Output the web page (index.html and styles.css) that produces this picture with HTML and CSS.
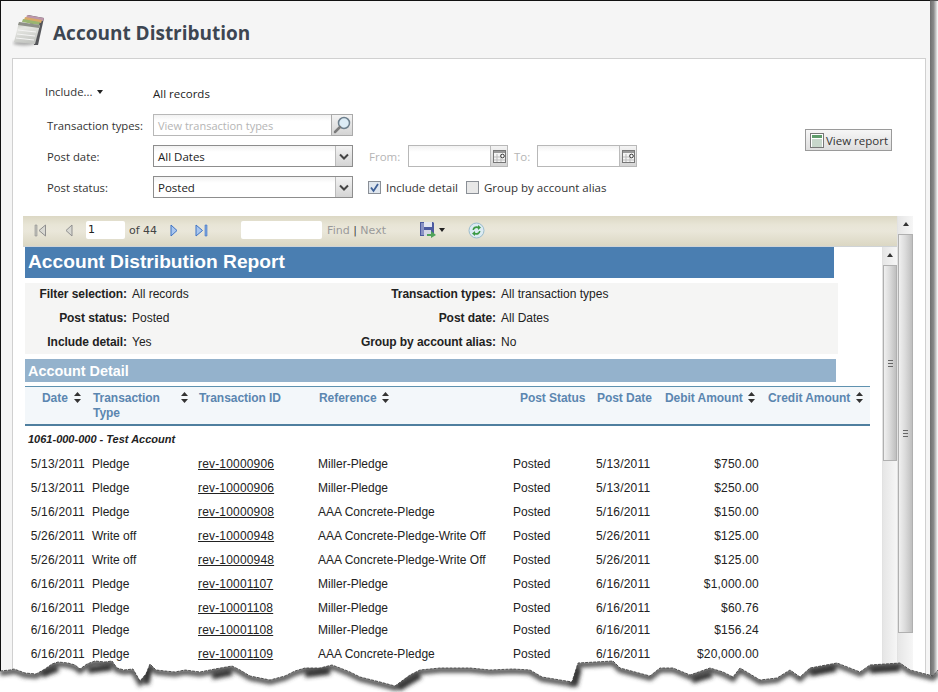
FILE: index.html
```html
<!DOCTYPE html>
<html lang="en">

<head>
  <meta charset="UTF-8">
  <title>Account Distribution</title>
  <link rel="stylesheet" href="styles.css">
</head>

<body>
  <svg class="defs" width="0" height="0">
    <symbol id="sort" viewBox="0 0 7 11">
      <path d="M3.500 0 7 4H0zM0 7h7l-3.500 4z" fill="#333" />
    </symbol>
    <symbol id="chevron" viewBox="0 0 10 7">
      <path d="M1 1.500 5 5.500 9 1.500" fill="none" stroke="#444" stroke-width="2" />
    </symbol>
    <symbol id="calendar" viewBox="0 0 13 13">
      <rect x="0.500" y="0.500" width="12" height="12" fill="#f4f4f4" stroke="#777" />
      <rect x="1" y="1" width="11" height="2" fill="#999" />
      <path d="M1 7h7M1 10h11M4 4v8M8 4v8" stroke="#bbb" />
      <circle cx="9.500" cy="6" r="1.800" fill="#fff" stroke="#333" />
    </symbol>
  </svg>

  <div class="page">
    <div class="window">
      <header class="title-bar">
        <svg class="ledger" width="36" height="36" viewBox="0 0 36 36">
          <defs>
            <linearGradient id="sheet" x1="0" y1="0" x2="0.300" y2="1">
              <stop offset="0" stop-color="#b9bbb4" />
              <stop offset="0.350" stop-color="#e6e7e3" />
              <stop offset="1" stop-color="#c4c6c2" />
            </linearGradient>
            <filter id="icon-soft" x="-30%" y="-100%" width="160%" height="300%">
              <feGaussianBlur stdDeviation="1.500" />
            </filter>
          </defs>
          <ellipse cx="12" cy="30" rx="11" ry="2.500" fill="#aaa" filter="url(#icon-soft)" />
          <path d="M16 2 32 5 26 32 22 32z" fill="#55565a" />
          <path d="M15 2 32 5 31 8 14 5z" fill="#bd97ab" />
          <path d="M13 4 30 7 29 10 12 7z" fill="#d9a968" />
          <path d="M11 6 28 9 27 12 10 9z" fill="#9ab570" />
          <path d="M7 9 28 12 23 31 2 29z" fill="url(#sheet)" />
          <path d="M7 9 28 12 27 15 6 12z" fill="#8f9189" />
          <path d="M6 17 24 19M5 21 23 23M4 25 22 27" stroke="#f4f4f4" />
        </svg>
        <h1>Account Distribution</h1>
      </header>

      <main class="panel">
        <form class="filters">
          <div class="filter-grid">
            <span class="filter-label include">Include...<i class="caret"></i></span>
            <span class="all-records">All records</span>
            <span></span>

            <span class="filter-label">Transaction types:</span>
            <span class="combo">
              <span class="combo-text muted">View transaction types</span>
              <span class="combo-btn search-btn">
                <svg width="20" height="20" viewBox="0 0 20 20">
                  <circle cx="12" cy="8" r="5.500" fill="#dcecf6" stroke="#6d7f8d" stroke-width="1.500" />
                  <path d="M8 12 3 17" stroke="#7b7b7b" stroke-width="2.500" stroke-linecap="round" />
                </svg>
              </span>
            </span>
            <span></span>

            <span class="filter-label">Post date:</span>
            <span class="combo dark">
              <span class="combo-text">All Dates</span>
              <span class="combo-btn"><svg width="10" height="7"><use href="#chevron" /></svg></span>
            </span>
            <span class="dates">
              <span class="muted from">From:</span>
              <span class="combo date-box">
                <span class="combo-text"></span>
                <span class="combo-btn"><svg width="13" height="13"><use href="#calendar" /></svg></span>
              </span>
              <span class="muted to">To:</span>
              <span class="combo date-box">
                <span class="combo-text"></span>
                <span class="combo-btn"><svg width="13" height="13"><use href="#calendar" /></svg></span>
              </span>
            </span>

            <span class="filter-label">Post status:</span>
            <span class="combo dark">
              <span class="combo-text">Posted</span>
              <span class="combo-btn"><svg width="10" height="7"><use href="#chevron" /></svg></span>
            </span>
            <span class="checks">
              <span class="check">
                <svg width="13" height="13" viewBox="0 0 13 13">
                  <rect x="0.500" y="0.500" width="12" height="12" fill="#dfe6ee" stroke="#8a8f96" />
                  <path d="M3 6.500 5.500 10 10 3" fill="none" stroke="#3d5f96" stroke-width="1.800" />
                </svg>
                Include detail
              </span>
              <span class="check">
                <svg width="13" height="13" viewBox="0 0 13 13">
                  <rect x="0.500" y="0.500" width="12" height="12" fill="#e8e8e8" stroke="#8a8f96" />
                </svg>
                Group by account alias
              </span>
            </span>
          </div>

          <button class="view-btn" type="button">
            <svg width="14" height="15" viewBox="0 0 14 15">
              <rect x="0.500" y="0.500" width="13" height="14" fill="#fff" stroke="#777" />
              <rect x="2" y="2" width="10" height="3" fill="#5f9c6b" />
              <path d="M2 7h10M2 9h10M2 11h10M2 13h10" stroke="#8fae96" />
            </svg>
            View report
          </button>
        </form>

        <section class="viewer">
          <div class="viewer-main">
            <div class="toolbar">
              <svg class="tool first" width="13" height="13" viewBox="0 0 13 13">
                <path d="M1 1h2v11H1z" fill="#c2c2bb" stroke="#8f8f8f" stroke-width="0.600" />
                <path d="M11.500 1v11L5 6.500z" fill="#d8d8d2" stroke="#8f8f8f" />
              </svg>
              <svg class="tool prev" width="8" height="13" viewBox="0 0 8 13">
                <path d="M7 1v11L1 6.500z" fill="#d8d8d2" stroke="#8f8f8f" />
              </svg>
              <span class="tool-input page-input">1</span>
              <span class="page-count">of 44</span>
              <svg class="tool next" width="8" height="13" viewBox="0 0 8 13">
                <path d="M1 1v11l6-5.500z" fill="#a9c6ee" stroke="#3d72c4" />
              </svg>
              <svg class="tool last" width="13" height="13" viewBox="0 0 13 13">
                <path d="M1 1v11l6.500-5.500z" fill="#a9c6ee" stroke="#3d72c4" />
                <path d="M10 1h2v11h-2z" fill="#7fa6e0" stroke="#3d72c4" stroke-width="0.600" />
              </svg>
              <span class="tool-input find-input"></span>
              <span class="find-links">Find <b>|</b> Next</span>
              <svg class="tool save" width="16" height="16" viewBox="0 0 16 16">
                <path d="M0 0h13l1 1v13H0z" fill="#4c5aa0" />
                <rect x="1" y="1" width="3" height="12" fill="#8a92c4" />
                <rect x="4" y="0" width="8" height="5" fill="#e4e6f0" />
                <rect x="4" y="8" width="7" height="6" fill="#d5d7e6" />
                <path d="M7 12h4V9l5 4-5 3v-2H7z" fill="#4fa35a" />
              </svg>
              <i class="caret save-caret"></i>
              <svg class="tool refresh" width="17" height="17" viewBox="0 0 17 17">
                <circle cx="8.500" cy="8.500" r="7.500" fill="#dcebf3" stroke="#9bbccd" />
                <path d="M4.500 8A4 4 0 0 1 10 4.500V3l3 2.500L10 8V6.500A2.500 2.500 0 0 0 6 8z" fill="#3d9a45" />
                <path d="M12.500 9A4 4 0 0 1 7 12.500V14l-3-2.500L7 9v1.500A2.500 2.500 0 0 0 11 9z" fill="#3d9a45" />
              </svg>
            </div>

            <div class="report-wrap">
              <article class="report">
                <h2 class="report-title">Account Distribution Report</h2>
                <div class="summary">
                  <b>Filter selection:</b><span>All records</span>
                  <b>Transaction types:</b><span>All transaction types</span>
                  <b>Post status:</b><span>Posted</span>
                  <b>Post date:</b><span>All Dates</span>
                  <b>Include detail:</b><span>Yes</span>
                  <b>Group by account alias:</b><span>No</span>
                </div>
                <h3 class="section-title">Account Detail</h3>

                <table class="detail">
                  <colgroup>
                    <col class="c-date">
                    <col class="c-type">
                    <col class="c-id">
                    <col class="c-ref">
                    <col class="c-status">
                    <col class="c-post">
                    <col class="c-debit">
                    <col class="c-credit">
                  </colgroup>
                  <thead>
                    <tr>
                      <th class="th-date">Date<svg class="sort" width="7" height="11"><use href="#sort" /></svg></th>
                      <th class="th-type">Transaction<svg class="sort" width="7" height="11"><use href="#sort" /></svg><br>Type</th>
                      <th class="th-id">Transaction ID</th>
                      <th class="th-ref">Reference<svg class="sort" width="7" height="11"><use href="#sort" /></svg></th>
                      <th class="th-status">Post Status</th>
                      <th class="th-post">Post Date</th>
                      <th class="th-debit">Debit Amount<svg class="sort" width="7" height="11"><use href="#sort" /></svg></th>
                      <th class="th-credit">Credit Amount<svg class="sort" width="7" height="11"><use href="#sort" /></svg></th>
                    </tr>
                  </thead>
                  <tbody>
                    <tr class="group">
                      <td colspan="8">1061-000-000 - Test Account</td>
                    </tr>
                    <tr>
                      <td class="num">5/13/2011</td><td>Pledge</td><td><a href="#">rev-10000906</a></td><td>Miller-Pledge</td><td>Posted</td><td class="post-date">5/13/2011</td><td class="num">$750.00</td><td></td>
                    </tr>
                    <tr>
                      <td class="num">5/13/2011</td><td>Pledge</td><td><a href="#">rev-10000906</a></td><td>Miller-Pledge</td><td>Posted</td><td class="post-date">5/13/2011</td><td class="num">$250.00</td><td></td>
                    </tr>
                    <tr>
                      <td class="num">5/16/2011</td><td>Pledge</td><td><a href="#">rev-10000908</a></td><td>AAA Concrete-Pledge</td><td>Posted</td><td class="post-date">5/16/2011</td><td class="num">$150.00</td><td></td>
                    </tr>
                    <tr>
                      <td class="num">5/26/2011</td><td>Write off</td><td><a href="#">rev-10000948</a></td><td>AAA Concrete-Pledge-Write Off</td><td>Posted</td><td class="post-date">5/26/2011</td><td class="num">$125.00</td><td></td>
                    </tr>
                    <tr>
                      <td class="num">5/26/2011</td><td>Write off</td><td><a href="#">rev-10000948</a></td><td>AAA Concrete-Pledge-Write Off</td><td>Posted</td><td class="post-date">5/26/2011</td><td class="num">$125.00</td><td></td>
                    </tr>
                    <tr>
                      <td class="num">6/16/2011</td><td>Pledge</td><td><a href="#">rev-10001107</a></td><td>Miller-Pledge</td><td>Posted</td><td class="post-date">6/16/2011</td><td class="num">$1,000.00</td><td></td>
                    </tr>
                    <tr>
                      <td class="num">6/16/2011</td><td>Pledge</td><td><a href="#">rev-10001108</a></td><td>Miller-Pledge</td><td>Posted</td><td class="post-date">6/16/2011</td><td class="num">$60.76</td><td></td>
                    </tr>
                    <tr class="short">
                      <td class="num">6/16/2011</td><td>Pledge</td><td><a href="#">rev-10001108</a></td><td>Miller-Pledge</td><td>Posted</td><td class="post-date">6/16/2011</td><td class="num">$156.24</td><td></td>
                    </tr>
                    <tr>
                      <td class="num">6/16/2011</td><td>Pledge</td><td><a href="#">rev-10001109</a></td><td>AAA Concrete-Pledge</td><td>Posted</td><td class="post-date">6/16/2011</td><td class="num">$20,000.00</td><td></td>
                    </tr>
                  </tbody>
                </table>
              </article>

              <div class="scrollbar inner">
                <i class="arrow"></i>
                <div class="thumb"><span class="grip"></span></div>
              </div>
            </div>
          </div>

          <div class="scrollbar outer">
            <i class="arrow"></i>
            <div class="thumb"><span class="grip"></span></div>
          </div>
        </section>
      </main>
    </div>
    <div class="shade"></div>
  </div>

  <!-- torn bottom edge of the screenshot -->
  <svg class="torn" width="938" height="42" viewBox="0 650 938 42">
    <defs>
      <filter id="soft" x="-5%" y="-50%" width="110%" height="200%">
        <feGaussianBlur stdDeviation="2.200" />
      </filter>
      <clipPath id="below">
        <path d="M0 671 10 670 14 669 25 673 36 674 45 669 52 664 58 662 68 663 75 665 80 669 87 664 95 661 105 662 112 661 117 668 124 670 133 669 140 681 146 674 150 664 156 670 165 671 175 672 185 670 200 672 215 669 232 666 240 670 250 676 270 680 285 676 295 671 305 668 320 668 332 665 340 668 350 672 360 677 380 682 395 686 410 675 420 670 440 668 455 668 470 668 490 670 513 669 530 670 542 677 572 682 578 663 613 661 620 668 650 676 660 668 673 668 690 675 710 668 723 672 733 677 740 668 760 680 777 678 790 670 800 677 810 668 837 663 860 672 870 665 900 663 910 670 933 676 938 670V692H0z" />
      </clipPath>
    </defs>
    <g clip-path="url(#below)">
      <rect x="0" y="650" width="938" height="42" fill="#fff" />
      <polyline class="torn-shadow" filter="url(#soft)" points="0 673 10 672 14 671 25 675 36 676 45 671 52 666 58 664 68 665 75 667 80 671 87 666 95 663 105 664 112 663 117 670 124 672 133 671 140 683 146 676 150 666 156 672 165 673 175 674 185 672 200 674 215 671 232 668 240 672 250 678 270 682 285 678 295 673 305 670 320 670 332 667 340 670 350 674 360 679 380 684 395 688 410 677 420 672 440 670 455 670 470 670 490 672 513 671 530 672 542 679 572 684 578 665 613 663 620 670 650 678 660 670 673 670 690 677 710 670 723 674 733 679 740 670 760 682 777 680 790 672 800 679 810 670 837 665 860 674 870 667 900 665 910 672 933 678 938 672" />
      <path class="torn-heavy" filter="url(#soft)" d="M42 674 58 668M88 670 112 667M148 668 146 684M232 672 212 676M305 674 330 671M398 688 420 675M578 668 574 686M692 680 712 674M810 673 836 668M870 670 900 668" />
    </g>
    <polyline class="torn-line" points="0 671 10 670 14 669 25 673 36 674 45 669 52 664 58 662 68 663 75 665 80 669 87 664 95 661 105 662 112 661 117 668 124 670 133 669 140 681 146 674 150 664 156 670 165 671 175 672 185 670 200 672 215 669 232 666 240 670 250 676 270 680 285 676 295 671 305 668 320 668 332 665 340 668 350 672 360 677 380 682 395 686 410 675 420 670 440 668 455 668 470 668 490 670 513 669 530 670 542 677 572 682 578 663 613 661 620 668 650 676 660 668 673 668 690 675 710 668 723 672 733 677 740 668 760 680 777 678 790 670 800 677 810 668 837 663 860 672 870 665 900 663 910 670 933 676 938 670" />
  </svg>
</body>

</html>
```

FILE: styles.css
```css
* {
  box-sizing: border-box;
}

html,
body {
  margin: 0;
  height: 692px;
  overflow: hidden;
  background: #fff;
}

body {
  position: relative;
  font-family: "Open Sans", "Liberation Sans", sans-serif;
  font-size: 11.5px;
  color: #333;
}

.defs {
  position: absolute;
}

.page {
  display: flex;
  height: 692px;
}

.window {
  width: 930px;
  background: #f5f5f5;
  border-top: 1px solid #111;
  border-left: 1px solid #111;
  padding-left: 11px;
  padding-right: 4px;
  overflow: hidden;
}

.shade {
  width: 8px;
  border-top: 1px solid #555;
  background: linear-gradient(to right, #6e6e6e, #8a8a8a 45%, #d5d5d5 80%, #fff);
}

.title-bar {
  display: flex;
  align-items: center;
  gap: 5px;
  height: 57px;
  padding-top: 6px;
}

.ledger {
  margin-top: -4px;
}

.title-bar h1 {
  margin: 0;
  font-size: 19px;
  font-weight: 700;
  color: #3d4652;
}

.panel {
  height: 640px;
  background: #fff;
  border: 1px solid #d0d0d0;
  border-bottom: 0;
  padding: 24px 0 0 10px;
}

/* filter form */
.filters {
  display: flex;
  align-items: flex-start;
  height: 133px;
}

.filter-grid {
  display: grid;
  grid-template-columns: 106px 200px auto;
  grid-template-rows: 22px 22px 22px 22px;
  row-gap: 9px;
  align-items: center;
  margin-left: 24px;
}

.filter-label {
  font-size: 11.3px;
  color: #333;
}

.include {
  display: flex;
  align-items: center;
  gap: 5px;
  margin: -5px 0 0 -2px;
}

.caret {
  display: inline-block;
  border-left: 3px solid transparent;
  border-right: 3px solid transparent;
  border-top: 4px solid #222;
}

.all-records {
  margin-top: -2px;
  color: #222;
}

.combo {
  display: flex;
  height: 22px;
  border: 1px solid #b8b8b8;
  background: linear-gradient(#f2f2f2, #fff 30%);
}

.combo.dark {
  border-color: #8d8d8d;
}

.combo-text {
  flex: 1;
  padding-left: 4px;
  line-height: 21px;
  color: #222;
  white-space: nowrap;
}

.combo-text.muted {
  font-size: 11px;
  color: #b5b5b5;
}

.muted {
  color: #b5b5b5;
}

.combo-btn {
  display: flex;
  align-items: center;
  justify-content: center;
  width: 17px;
  margin: 0 0 0 1px;
  border-left: 1px solid #bbb;
  background: linear-gradient(#f3f3f3, #d4d4d4);
}

.search-btn {
  width: 22px;
  border: 1px solid #aaa;
  margin: -1px -1px -1px 0;
}

.dates {
  display: flex;
  align-items: center;
  padding-left: 16px;
}

.from {
  width: 39px;
}

.to {
  width: 29px;
  padding-left: 6px;
}

.date-box {
  width: 100px;
}

.checks {
  display: flex;
  align-items: center;
  gap: 8px;
  padding-left: 15px;
}

.check {
  display: flex;
  align-items: center;
  gap: 5px;
  color: #333;
}

.view-btn {
  display: flex;
  align-items: center;
  gap: 2px;
  width: 87px;
  height: 22px;
  margin: 46px 0 0 168px;
  padding: 0 0 0 4px;
  border: 1px solid #9a9a9a;
  background: linear-gradient(#f6f6f6, #dedede);
  font: inherit;
  color: #333;
}

/* report viewer */
.viewer {
  display: flex;
  width: 890px;
}

.viewer-main {
  width: 874px;
}

.toolbar {
  display: flex;
  align-items: center;
  height: 31px;
  padding-bottom: 2px;
  border-bottom: 1px solid #cfd3d6;
  background: linear-gradient(#dcd8c4, #e8e5d6 30%, #eae7da 50%, #dbd7c3);
  font-family: "DejaVu Sans", sans-serif;
  font-size: 11px;
  color: #444;
}

.tool {
  flex: none;
}

.first {
  margin-left: 11px;
}

.prev {
  margin-left: 18px;
}

.tool-input {
  display: block;
  height: 18px;
  background: #fff;
  border-radius: 2px;
  line-height: 18px;
  padding-left: 2px;
}

.page-input {
  width: 39px;
  margin-left: 13px;
  color: #222;
}

.page-count {
  margin-left: 4px;
}

.next {
  margin-left: 13px;
}

.last {
  margin-left: 17px;
}

.find-input {
  width: 81px;
  margin-left: 33px;
}

.find-links {
  margin-left: 5px;
  color: #999;
}

.find-links b {
  font-weight: 400;
  color: #444;
}

.save {
  margin-left: 34px;
}

.save-caret {
  margin-left: 3px;
}

.refresh {
  margin-left: 23px;
}

.report-wrap {
  display: flex;
  height: 426px;
}

.report {
  width: 858px;
  padding-left: 2px;
  font-family: "Liberation Sans", Arial, sans-serif;
  font-size: 12px;
  color: #222;
}

.report-title {
  width: 809px;
  height: 31px;
  margin: 0 0 5px;
  padding-left: 3px;
  background: #4a7eb1;
  color: #fff;
  font-size: 19.2px;
  line-height: 29px;
}

.summary {
  display: grid;
  grid-template-columns: 102px 160px 199px 1fr;
  grid-auto-rows: 22px;
  column-gap: 5px;
  row-gap: 2px;
  align-items: center;
  width: 813px;
  height: 71px;
  background: #f5f5f4;
}

.summary b {
  letter-spacing: -0.07px;
  text-align: right;
}

.section-title {
  width: 811px;
  height: 23px;
  margin: 5px 0 4px;
  padding: 1px 0 0 3px;
  background: #94b2cc;
  color: #fff;
  font-size: 14.4px;
  line-height: 23px;
}

.detail {
  width: 845px;
  border-collapse: collapse;
  table-layout: fixed;
}

.c-date {
  width: 65px;
}

.c-type {
  width: 105px;
}

.c-id {
  width: 120px;
}

.c-ref {
  width: 195px;
}

.c-status {
  width: 83px;
}

.c-post {
  width: 64px;
}

.c-debit {
  width: 106px;
}

.detail thead tr {
  height: 38px;
  background: #f3f7fa;
  border-top: 1px solid #5f92b0;
  border-bottom: 2px solid #4f7f9f;
}

.detail th {
  padding: 4px 0 0;
  vertical-align: top;
  text-align: left;
  font-weight: 700;
  line-height: 15px;
  letter-spacing: -0.05px;
  color: #5b86b0;
  white-space: nowrap;
}

.sort {
  vertical-align: -1px;
}

.detail .th-date {
  padding-left: 17px;
}

.th-date .sort {
  margin-left: 6px;
}

.detail .th-type {
  padding-left: 3px;
}

.th-type .sort {
  margin-left: 21px;
}

.detail .th-id {
  padding-left: 4px;
}

.detail .th-ref {
  padding-left: 4px;
}

.th-ref .sort {
  margin-left: 5px;
}

.detail .th-status {
  padding-left: 10px;
}

.detail .th-post {
  padding-left: 4px;
}

.detail .th-debit {
  padding-left: 8px;
}

.th-debit .sort {
  margin-left: 5px;
}

.detail .th-credit {
  padding-left: 5px;
}

.th-credit .sort {
  margin-left: 6px;
}

.detail td {
  padding: 0;
  white-space: nowrap;
}

.detail tbody tr {
  height: 24px;
}

.detail tbody tr.short {
  height: 22px;
}

.detail tbody tr.short td {
  padding-bottom: 2px;
}

.detail tbody tr.group {
  height: 27px;
}

.group td {
  padding-left: 3px;
  font-size: 11px;
  font-weight: 700;
  font-style: italic;
  color: #222;
}

.detail td.num {
  padding-right: 4px;
  text-align: right;
  letter-spacing: 0.2px;
}

.detail td.num:first-child {
  padding-right: 5px;
}

.detail td:nth-child(2) {
  padding-left: 2px;
}

.detail td:nth-child(3),
.detail td:nth-child(4),
.detail td:nth-child(5) {
  padding-left: 3px;
}

.detail td.post-date {
  padding-left: 3px;
  letter-spacing: 0.2px;
}

.detail a {
  color: #222;
  letter-spacing: 0.17px;
}

/* scrollbars */
.scrollbar {
  position: relative;
  flex: none;
  width: 15px;
  margin-left: 1px;
  background: linear-gradient(to right, #e6e6e6, #f6f6f6);
  border-left: 1px solid #e2e2e2;
}

.scrollbar.outer {
  margin-left: 0;
  width: 16px;
  height: 640px;
}

.arrow {
  display: block;
  width: 0;
  margin: 6px auto 0;
  border-left: 3px solid transparent;
  border-right: 3px solid transparent;
  border-bottom: 4px solid #333;
}

.thumb {
  display: flex;
  align-items: center;
  justify-content: center;
  margin-top: 8px;
  border: 1px solid #b0b0b0;
  background: linear-gradient(to right, #f0f0f0, #dadada 50%, #bfbfbf);
}

.inner .thumb {
  height: 196px;
}

.outer .thumb {
  height: 399px;
}

.grip {
  display: block;
  width: 5px;
  height: 7px;
  border-top: 1px solid #666;
  border-bottom: 1px solid #666;
  background: linear-gradient(#666, #666) center / 100% 1px no-repeat;
}

/* torn edge sits over the bottom of the page */
.torn {
  position: absolute;
  left: 0;
  bottom: 0;
  display: block;
}

.torn-shadow {
  fill: none;
  stroke: #444;
  stroke-width: 5;
}

.torn-heavy {
  fill: none;
  stroke: #333;
  stroke-width: 7;
}

.torn-line {
  fill: none;
  stroke: #333;
  stroke-width: 0.8;
  stroke-dasharray: 3 1;
}
```
